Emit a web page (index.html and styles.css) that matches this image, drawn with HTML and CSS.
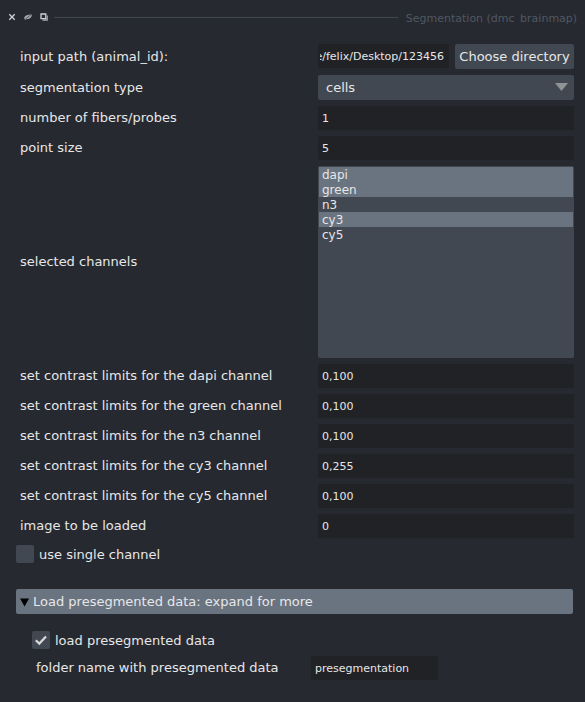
FILE: index.html
```html
<!DOCTYPE html>
<html lang="en">
<head>
<meta charset="utf-8">
<title>Segmentation (dmc_brainmap)</title>
<link rel="stylesheet" href="styles.css">
</head>
<body>
<header class="titlebar">
  <svg class="icon" viewBox="0 0 8 8"><path d="M1.3 1.3 6.7 6.7M6.7 1.3 1.3 6.7"/></svg>
  <svg class="icon" viewBox="0 0 8 8"><path class="solid" d="M.2 4.4C1.4 2.2 4 1.3 7.6 1.5 8.2 4.6 5.6 6.6.6 6.4z"/><path class="slash" d="M1.6 6 6.8 1.8"/></svg>
  <svg class="icon" viewBox="0 0 8 8"><path d="M1 1h4.8v4.6H1z"/><path class="shade" d="M2.5 7H7.2V2.6"/></svg>
  <span class="rule"></span>
  <h1 class="title">Segmentation (dmc_brainmap)</h1>
</header>
<main>
  <div class="form">
    <div class="label tall">input path (animal_id):</div>
    <div class="picker"><div class="field path"><span>e/felix/Desktop/123456</span></div><button class="button">Choose directory</button></div>
    <div class="label tall">segmentation type</div>
    <div class="select"><span>cells</span><svg class="arrow" viewBox="0 0 13 8"><path d="M0 0h13L6.5 8z"/></svg></div>
    <div class="label">number of fibers/probes</div><div class="field">1</div>
    <div class="label">point size</div><div class="field">5</div>
    <div class="label">selected channels</div>
    <ul class="list"><li class="selected">dapi</li><li class="selected">green</li><li>n3</li><li class="selected">cy3</li><li>cy5</li></ul>
    <div class="label">set contrast limits for the dapi channel</div><div class="field">0,100</div>
    <div class="label">set contrast limits for the green channel</div><div class="field">0,100</div>
    <div class="label">set contrast limits for the n3 channel</div><div class="field">0,100</div>
    <div class="label">set contrast limits for the cy3 channel</div><div class="field">0,255</div>
    <div class="label">set contrast limits for the cy5 channel</div><div class="field">0,100</div>
    <div class="label">image to be loaded</div><div class="field">0</div>
  </div>
  <div class="check"><span class="box"></span><span>use single channel</span></div>
  <div class="section"><svg class="caret" viewBox="0 0 10 9"><path d="M0 0h10L5 9z"/></svg><span>Load presegmented data: expand for more</span></div>
  <div class="content">
    <div class="check"><span class="box"><svg viewBox="0 0 18 18"><path d="M3.8 9.3 7.3 12.6 14 5.4"/></svg></span><span>load presegmented data</span></div>
    <div class="folder"><div class="label">folder name with presegmented data</div><div class="field">presegmentation</div></div>
  </div>
</main>
</body>
</html>
```
FILE: styles.css
```css
* { box-sizing: border-box; }
body {
  margin: 0;
  height: 702px;
  overflow: hidden;
  background: #262930;
  color: #e6e7e8;
  font: 13px/15px "DejaVu Sans", sans-serif;
  white-space: nowrap;
}
.titlebar {
  display: flex;
  align-items: center;
  height: 34px;
  padding: 0 8px;
}
.icon {
  width: 8px;
  height: 8px;
  margin-right: 8px;
  fill: none;
  stroke: #d0d1d3;
  stroke-width: 1.3;
}
.icon .solid { fill: #a4a6a9; stroke: none; }
.icon .slash { stroke: #4c5056; stroke-width: .9; }
.icon .shade { stroke: #a4a6a9; }
.rule { height: 1px; width: 344px; margin-left: -2px; background: #414851; }
.title {
  margin: 2px 0 0 8px;
  height: 12px;
  overflow: hidden;
  font-size: 11px;
  line-height: 13px;
  font-weight: 400;
  color: #505862;
}
main { padding: 10px 11px 0 16px; }
.form {
  display: grid;
  grid-template-columns: 302px 256px;
  row-gap: 6px;
  align-items: center;
}
.label { padding: 0 0 2px 4px; }
.label.tall { padding-bottom: 0; }
.field {
  height: 24px;
  padding-left: 4px;
  border-radius: 2px;
  background: #212226;
  font-size: 11px;
  line-height: 25px;
}
.picker { display: flex; gap: 6px; }
.path {
  display: flex;
  justify-content: flex-end;
  width: 131px;
  padding: 0 5px 0 0;
}
.path span {
  width: 124px;
  overflow: hidden;
  direction: rtl;
}
.button {
  width: 119px;
  height: 25px;
  padding: 0;
  border: 0;
  border-radius: 2px;
  background: #414851;
  color: inherit;
  font: inherit;
}
.select {
  display: flex;
  align-items: center;
  justify-content: space-between;
  height: 25px;
  padding: 0 6px 0 8px;
  border-radius: 2px;
  background: #414851;
}
.arrow { width: 13px; height: 8px; margin-bottom: 1px; fill: #909296; }
.list {
  height: 192px;
  margin: 0;
  padding: 1px;
  border-radius: 2px;
  background: #414851;
  list-style: none;
  font-size: 12px;
}
.list li { height: 15px; padding-left: 3px; line-height: 16px; }
.list .selected { background: #6a7380; }
.check { display: flex; align-items: center; gap: 5px; height: 18px; margin-top: 7px; }
.box { width: 18px; height: 18px; border-radius: 2px; background: #414851; }
.box svg { display: block; fill: none; stroke: #d8d9db; stroke-width: 2.2; }
.section {
  display: flex;
  align-items: center;
  gap: 4px;
  width: 557px;
  height: 25px;
  margin-top: 26px;
  padding-left: 4px;
  border-radius: 2px;
  background: #6a7380;
}
.caret { width: 9px; height: 9px; margin-top: 1px; fill: #000; }
.content { padding: 10px 0 0 16px; }
.folder { display: flex; align-items: center; margin-top: 7px; }
.folder .label { width: 279px; }
.folder .field { width: 127px; }
```
